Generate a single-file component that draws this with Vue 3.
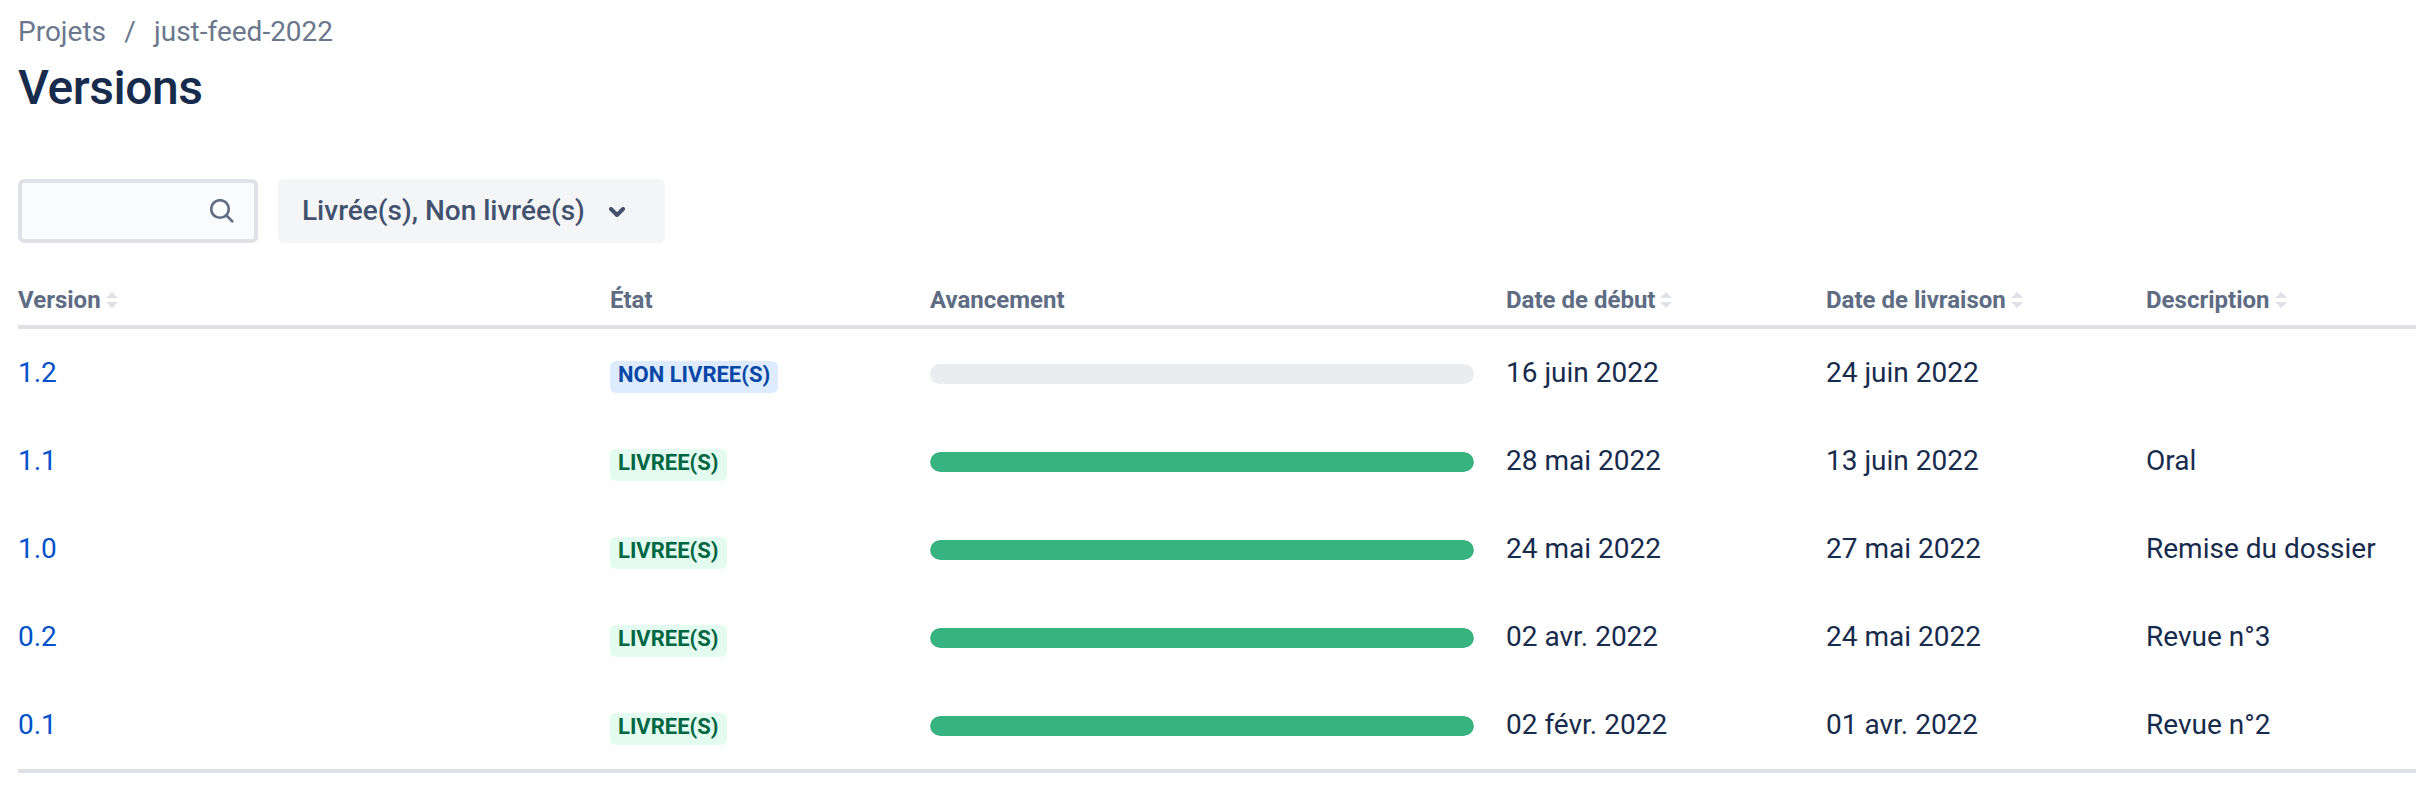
<script setup>
const columns = [
  { label: 'Version', sortable: true },
  { label: 'État', sortable: false },
  { label: 'Avancement', sortable: false },
  { label: 'Date de début', sortable: true },
  { label: 'Date de livraison', sortable: true },
  { label: 'Description', sortable: true },
]

const versions = [
  { name: '1.2', released: false, progress: 0, start: '16 juin 2022', release: '24 juin 2022', description: '' },
  { name: '1.1', released: true, progress: 100, start: '28 mai 2022', release: '13 juin 2022', description: 'Oral' },
  { name: '1.0', released: true, progress: 100, start: '24 mai 2022', release: '27 mai 2022', description: 'Remise du dossier' },
  { name: '0.2', released: true, progress: 100, start: '02 avr. 2022', release: '24 mai 2022', description: 'Revue n°3' },
  { name: '0.1', released: true, progress: 100, start: '02 févr. 2022', release: '01 avr. 2022', description: 'Revue n°2' },
]
</script>

<template>
  <main class="page">
    <nav class="breadcrumbs">
      <a class="crumb">Projets</a>
      <span class="separator">/</span>
      <a class="crumb">just-feed-2022</a>
    </nav>
    <h1 class="title">Versions</h1>

    <div class="filters">
      <label class="search">
        <input class="search-input" type="text" />
        <svg class="search-icon" viewBox="0 0 24 24" width="24" height="24">
          <circle cx="10" cy="10" r="8.8" />
          <path d="M16.5 16.5L22.3 22.3" />
        </svg>
      </label>
      <button class="status-filter" type="button">
        <span>Livrée(s), Non livrée(s)</span>
        <svg class="chevron" viewBox="0 0 16 10" width="16" height="10">
          <path d="M2 2L8 8L14 2" />
        </svg>
      </button>
    </div>

    <div class="table">
      <div class="row head">
        <div v-for="col in columns" :key="col.label" class="head-cell">
          <span>{{ col.label }}</span>
          <svg v-if="col.sortable" class="sort" viewBox="0 0 12 16" width="12" height="16">
            <path d="M0 6L6 0L12 6ZM0 10H12L6 16Z" />
          </svg>
        </div>
      </div>
      <div v-for="v in versions" :key="v.name" class="row body-row">
        <a class="version-link">{{ v.name }}</a>
        <div class="state">
          <span class="lozenge" :class="{ released: v.released }">
            <span class="lozenge-text">{{ v.released ? 'LIVRÉE(S)' : 'NON LIVRÉE(S)' }}</span>
          </span>
        </div>
        <div class="track">
          <div class="fill" :style="{ width: v.progress + '%' }"></div>
        </div>
        <span>{{ v.start }}</span>
        <span>{{ v.release }}</span>
        <span>{{ v.description }}</span>
      </div>
    </div>
  </main>
</template>

<style>
body {
  margin: 0;
  background: #fff;
}
</style>

<style scoped>
.page {
  box-sizing: border-box;
  height: 794px;
  padding: 12px 0 0 18px;
  overflow: hidden;
  font-family: Roboto, "Noto Sans", sans-serif;
  font-size: 28px;
  line-height: 40px;
  color: #172b4d;
}
.breadcrumbs {
  display: flex;
  color: #6b778c;
}
.separator {
  width: 16px;
  margin: 0 16px;
  text-align: center;
}
.title {
  margin: 8px 0 0;
  font-size: 48px;
  font-weight: 500;
  line-height: 56px;
  letter-spacing: -0.48px;
}
.filters {
  display: flex;
  gap: 20px;
  margin-top: 63px;
}
.search {
  box-sizing: border-box;
  display: flex;
  align-items: center;
  width: 240px;
  height: 64px;
  padding-right: 20px;
  border: 4px solid #dfe1e6;
  border-radius: 6px;
  background: #fafbfc;
}
.search-input {
  flex: 1;
  min-width: 0;
  border: 0;
  outline: 0;
  background: transparent;
}
.search-icon {
  fill: none;
  stroke: #5e6c84;
  stroke-width: 2.6;
  stroke-linecap: round;
}
.status-filter {
  display: flex;
  align-items: center;
  box-sizing: border-box;
  width: 387px;
  height: 64px;
  padding: 0 24px;
  border: 0;
  border-radius: 6px;
  background: #f4f5f7;
  color: #42526e;
  font: 500 28px/64px Roboto, "Noto Sans", sans-serif;
  white-space: nowrap;
}
.chevron {
  margin: 2px 0 0 24px;
  fill: none;
  stroke: #42526e;
  stroke-width: 4;
  stroke-linecap: round;
  stroke-linejoin: round;
}
.table {
  margin-top: 40px;
  border-bottom: 4px solid #dfe1e6;
}
.row {
  display: grid;
  grid-template-columns: 592px 320px 576px 320px 320px 1fr;
  align-items: start;
}
.head {
  box-sizing: border-box;
  height: 46px;
  padding-top: 1px;
  border-bottom: 4px solid #dfe1e6;
}
.head-cell {
  display: flex;
  align-items: center;
  gap: 5px;
  color: #5e6c84;
  font-size: 24px;
  font-weight: 700;
  line-height: 32px;
}
.sort {
  fill: #dfe1e6;
}
.body-row {
  box-sizing: border-box;
  height: 88px;
  padding-top: 24px;
}
.version-link {
  color: #0052cc;
}
.state {
  display: flex;
  padding-top: 8px;
}
.lozenge {
  box-sizing: border-box;
  height: 32px;
  padding: 4px 0;
  border-radius: 6px;
  background: #deebff;
  color: #0747a6;
  font-size: 22px;
  font-weight: 700;
  line-height: 20px;
}
.lozenge.released {
  background: #e3fcef;
  color: #006644;
}
.lozenge-text {
  display: block;
  padding: 0 8px 4px;
  overflow: hidden;
}
.track {
  width: 544px;
  height: 20px;
  margin-top: 11px;
  overflow: hidden;
  border-radius: 10px;
  background: #ebecf0;
}
.fill {
  height: 100%;
  border-radius: 10px;
  background: #36b37e;
}
</style>
